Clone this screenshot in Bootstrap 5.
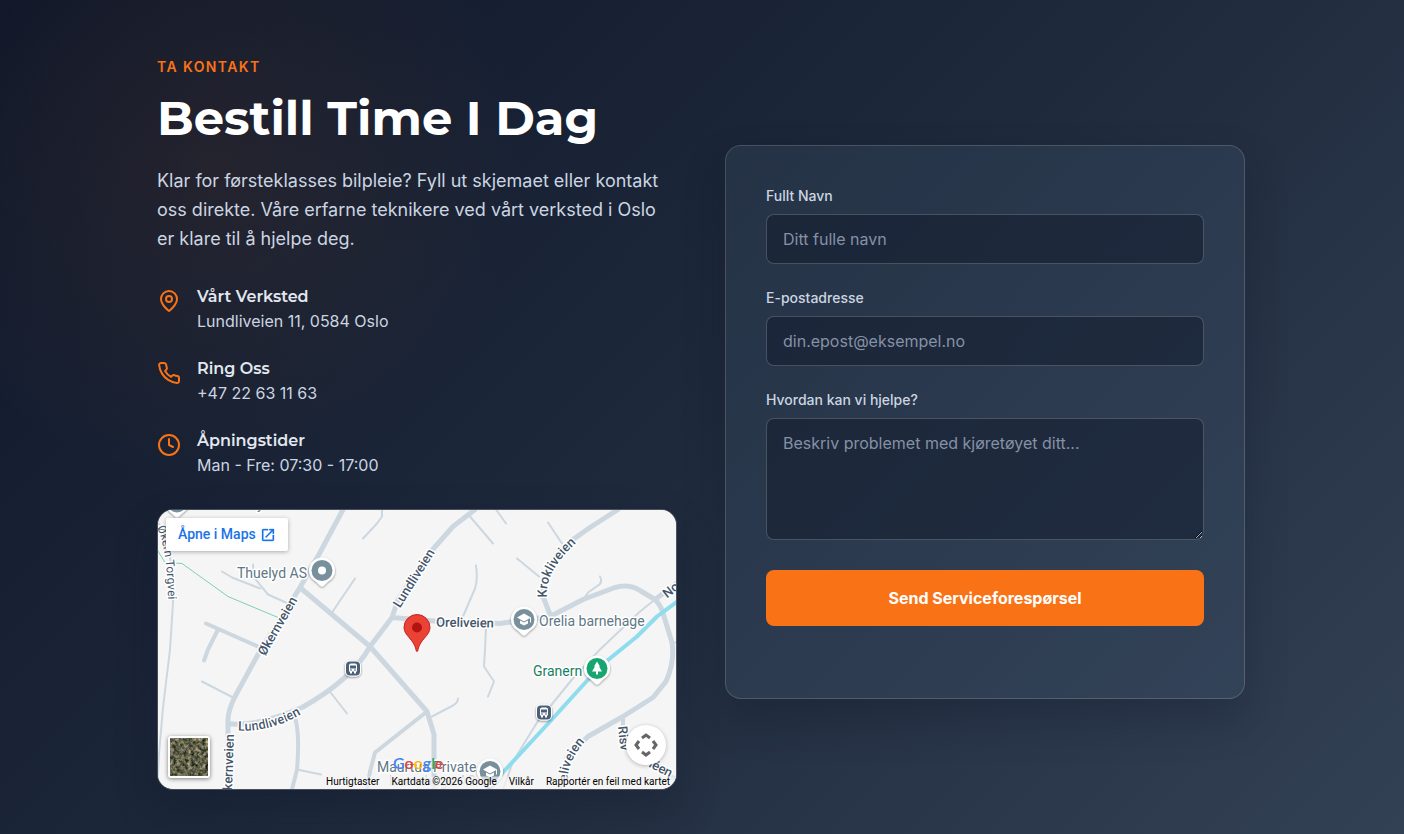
<!DOCTYPE html>
<html lang="no">
<head>
<meta charset="utf-8">
<meta name="viewport" content="width=device-width, initial-scale=1">
<title>Bestill Time I Dag</title>
<link href="https://cdn.jsdelivr.net/npm/bootstrap@5.3.0/dist/css/bootstrap.min.css" rel="stylesheet">
<style>
  :root { --accent: #f97316; --soft: #cbd5e1; --heading: Montserrat, Inter, sans-serif; }
  body { font-family: Inter, sans-serif; color: var(--soft); background: #1e293b; }
  .contact {
    min-height: 100vh; padding: 54px 2px 44px 0;
    background:
      radial-gradient(circle at 15% 20%, rgba(249,115,22,.07), transparent 320px),
      linear-gradient(135deg, #0f172a 0%, #1e293b 50%, #334155 100%);
  }
  .wrap { max-width: 1088px; }
  .split { display: grid; grid-template-columns: 1fr 1fr; gap: 48px; align-items: center; }
  .eyebrow { color: var(--accent); font-size: 14px; line-height: 26px; font-weight: 600; letter-spacing: .1em; }
  .headline { font: 700 48px/58px var(--heading); color: #fff; margin: 9px 0 19px; }
  .intro { font-size: 18px; line-height: 29px; margin-bottom: 31px; }
  .facts { gap: 22px; margin-bottom: 31px; line-height: 25px; }
  .facts svg { width: 24px; height: 24px; margin-top: 5px; fill: none; stroke: var(--accent); stroke-width: 2; stroke-linecap: round; stroke-linejoin: round; flex: none; }
  .facts h2 { font: 600 16px/25px var(--heading); color: #e2e8f0; margin: 0; }
  .mapbox { height: 281px; border: 1px solid rgba(255,255,255,.2); border-radius: 16px; overflow: hidden; background: #f5f5f5 padding-box; box-shadow: 0 20px 40px rgba(15,23,42,.3); font-family: Roboto, sans-serif; }
  .mapbox > svg { display: block; width: 100%; height: 100%; }
  .open-link { top: 8px; left: 8px; height: 33px; padding: 0 12px; gap: 4px; font-size: 14px; font-weight: 500; color: #1a73e8; background: #fff; border-radius: 2px; box-shadow: 0 1px 4px rgba(0,0,0,.3); }
  .sat { left: 10px; bottom: 11px; width: 42px; height: 42px; padding: 0; border: 2px solid #fff; border-radius: 3px; box-shadow: 0 1px 4px rgba(0,0,0,.5); overflow: hidden; background: #5b6150; }
  .pan { right: 10px; bottom: 24px; width: 40px; height: 40px; padding: 0; border: 0; border-radius: 50%; background: #fff; box-shadow: 0 1px 4px rgba(0,0,0,.25); }
  .credits { right: 0; bottom: 0; height: 14px; padding-right: 6px; gap: 12px; font-size: 10px; line-height: 14px; color: #000; white-space: nowrap; }
  .credits button { padding: 0; border: 0; background: none; }
  .credits button, .credits a { color: #000; text-decoration: none; }
  .panel { padding: 40px 40px 72px; border: 1px solid rgba(255,255,255,.2); border-radius: 16px; background: rgba(65,88,115,.27) padding-box; box-shadow: 0 20px 40px rgba(15,23,42,.3); }
  .panel label { font-size: 14px; line-height: 20px; font-weight: 500; margin-bottom: 8px; }
  .panel .form-control { height: 50px; padding: 12px 16px; font-size: 16px; line-height: 24px; color: #fff; background: rgba(15,23,42,.5); border: 1px solid rgba(255,255,255,.2); border-radius: 8px; }
  .panel .form-control::placeholder { color: #8591a5; }
  .panel textarea.form-control { height: 122px; }
  .send { height: 56px; margin-top: 30px; background: var(--accent); color: #fff; font-size: 16px; font-weight: 700; border: 0; border-radius: 8px; }
  .send:hover { background: #ea6a10; color: #fff; }
  .road path { fill: none; stroke: #cdd7e0; stroke-linejoin: round; stroke-linecap: round; }
  .lbl { font: 500 13px Roboto, sans-serif; fill: #45566b; stroke: #fff; stroke-width: 3px; paint-order: stroke; stroke-linejoin: round; }
  .poi { font: 400 14px Roboto, sans-serif; fill: #607786; stroke: #fff; stroke-width: 3px; paint-order: stroke; stroke-linejoin: round; }
  .logo { font: 600 16px Lato, sans-serif; }
  @media (max-width: 991px) { .split { grid-template-columns: 1fr; } .contact { padding: 32px 16px; } }
</style>
</head>
<body>
<main class="contact">
  <div class="wrap mx-auto split">
    <section>
      <div class="eyebrow">TA KONTAKT</div>
      <h1 class="headline">Bestill Time I Dag</h1>
      <p class="intro">Klar for førsteklasses bilpleie? Fyll ut skjemaet eller kontakt oss direkte. Våre erfarne teknikere ved vårt verksted i Oslo er klare til å hjelpe deg.</p>
      <div class="facts d-flex flex-column">
        <div class="d-flex gap-3">
          <svg viewBox="0 0 24 24" aria-hidden="true"><path d="M20 10c0 6-8 12-8 12s-8-6-8-12a8 8 0 0 1 16 0Z"/><circle cx="12" cy="10" r="3"/></svg>
          <div><h2>Vårt Verksted</h2><div>Lundliveien 11, 0584 Oslo</div></div>
        </div>
        <div class="d-flex gap-3">
          <svg viewBox="0 0 24 24" aria-hidden="true"><path d="M22 16.92v3a2 2 0 0 1-2.18 2 19.79 19.79 0 0 1-8.63-3.07 19.5 19.5 0 0 1-6-6 19.79 19.79 0 0 1-3.07-8.67A2 2 0 0 1 4.11 2h3a2 2 0 0 1 2 1.72 12.84 12.84 0 0 0 .7 2.81 2 2 0 0 1-.45 2.11L8.09 9.91a16 16 0 0 0 6 6l1.27-1.27a2 2 0 0 1 2.11-.45 12.84 12.84 0 0 0 2.81.7A2 2 0 0 1 22 16.92z"/></svg>
          <div><h2>Ring Oss</h2><div>+47 22 63 11 63</div></div>
        </div>
        <div class="d-flex gap-3">
          <svg viewBox="0 0 24 24" aria-hidden="true"><circle cx="12" cy="12" r="10"/><path d="M12 6v6l4 2"/></svg>
          <div><h2>Åpningstider</h2><div>Man - Fre: 07:30 - 17:00</div></div>
        </div>
      </div>
      <div class="mapbox position-relative">
        <svg viewBox="158 510 518 280" preserveAspectRatio="xMidYMid slice" role="img" aria-label="Kart">
          <defs>
            <filter id="drop" x="-30%" y="-30%" width="160%" height="170%"><feDropShadow dx="0" dy="1" stdDeviation="1" flood-opacity=".45"/></filter>
            <g id="pin"><path d="M0-13a13 13 0 0 1 13 13c0 6-4 9-8 12l-3 3q-2 2-4 0l-3-3c-4-3-8-6-8-12A13 13 0 0 1 0-13Z" fill="#fff" filter="url(#drop)"/></g>
            <g id="cap"><use href="#pin"/><circle r="10.500" fill="#78909c"/><path d="M0-6 7-2 0 2-7-2Z M-4 1v3l4 2 4-2v-3l-4 2Z M6-2h1v5h-1Z" fill="#fff"/></g>
            <g id="bus"><rect x="-8" y="-8" width="16" height="16" rx="5" fill="#fff" filter="url(#drop)"/><rect x="-7" y="-7" width="14" height="14" rx="4" fill="#4b6078"/><path d="M-4-3q0-2 2-2h4q2 0 2 2v6h-1v2h-2v-2h-2v2h-2v-2h-1Z" fill="#fff"/><path d="M-3-3h6v3h-6Z M-3 1h2v1h-2Z M1 1h2v1h-2Z" fill="#4b6078"/></g>
            <path id="lund" d="M238 731Q272 733 306 712"/>
            <path id="krok" d="M547 598Q544 572 578 542"/>
            <path id="torg" d="M157 528Q168 550 168 608"/>
            <path id="reli" d="M568 782Q566 760 594 732"/>
          </defs>
          <rect x="158" y="510" width="518" height="280" fill="#f5f5f5"/>
          <g class="road">
            <g stroke-width="2">
              <path stroke-width="2" d="M159 524Q174 550 173 603L170 650 163 708 159 755 157 790"/>
              <path d="M222 572 232 578 260 589M253 565 254 578 268 595 288 604M202 682 233 698M297 770 321 775M329 691 347 714M432 717 453 706Q458 703 458 699M486 627 485 650 484 667 494 682 488 697M382 510V517L377 524 363 539M355 579 332 613M470 517 493 544M476 566Q478 580 475 589L463 617M496 510 506 524M548 523 562 544M517 559 539 577M600 577Q603 583 598 586L588 593 582 602M655 600 640 612 600 650 572 680 537 723 513 762 503 790M674 643H677"/>
            </g>
            <path stroke-width="4" d="M206 624 258 647M218 630 208 650 204 661M295 718Q300 735 297 770L292 790M427 712 375 753 370 772 367 790M623 717V735L630 752 676 780M567 758 560 790"/>
            <path stroke-width="5" d="M343 510 320 553 300 588 258 655 235 697Q227 713 228 724V790M300 588 370 647 427 712 434 735V790M475 510 453 527 430 553 398 600 392 618 370 647Q352 680 302 708 255 728 228 724M392 618 440 622 500 624 550 617 583 600 615 588Q629 584 640 591L655 600Q662 607 664 617L672 643Q675 662 666 682L653 698 623 717 588 737 567 758M550 615 543 597Q541 565 573 540L590 528 618 510M655 600 678 583"/>
            <path style="stroke:#8fdcee" stroke-width="4" d="M680 600 657 617 637 637 600 667 550 722 500 776 485 792"/>
            <path style="stroke:#7fd0ae" stroke-width="1" d="M157 550 165 563 182 564 228 597 278 618"/>
          </g>
          <use href="#pin" x="177" y="502"/><circle cx="177" cy="503" r="10" fill="#78909c"/>
          <text class="poi" x="257" y="509">y</text>
          <text class="lbl" style="font-size:12px;font-weight:400"><textPath href="#torg">Økern Torgvei</textPath></text>
          <text class="lbl" transform="translate(265 657) rotate(-60)">Økernveien</text>
          <text class="lbl" transform="translate(400 609) rotate(-58)">Lundliveien</text>
          <text class="lbl" transform="translate(436 627) rotate(1)">Oreliveien</text>
          <text class="lbl"><textPath href="#krok">Krokliveien</textPath></text>
          <text class="lbl"><textPath href="#lund">Lundliveien</textPath></text>
          <text class="lbl"><textPath href="#reli">eliveien</textPath></text>
          <text class="lbl" transform="translate(232 791) rotate(-88)">kernveien</text>
          <text class="lbl" transform="translate(667 599) rotate(-38)">No</text>
          <text class="lbl" transform="translate(618 727) rotate(84)">Risv</text>
          <text class="lbl" transform="translate(648 767) rotate(27)">léen</text>
          <text class="poi" x="237" y="578">Thuelyd AS</text>
          <text class="poi" x="539" y="626">Orelia barnehage</text>
          <text class="poi" style="fill:#188060" x="533" y="676">Granern</text>
          <text class="poi" x="377" y="772">Maurtua Private</text>
          <text class="poi" style="opacity:.3" x="389" y="786">barnehage AS</text>
          <g transform="translate(322 571)"><use href="#pin"/><circle r="10.500" fill="#78909c"/><circle r="4" fill="#fff"/></g>
          <use href="#cap" x="524" y="620"/>
          <use href="#cap" x="490" y="772"/>
          <g transform="translate(597 669)"><use href="#pin"/><circle r="10.500" fill="#18a572"/><path d="M0-7 3-2H2L5 3H1V6H-1V3H-5L-2-2H-3Z" fill="#fff"/></g>
          <use href="#bus" x="353" y="669"/>
          <use href="#bus" x="544" y="713"/>
          <path d="M417 615a13 13 0 0 1 13 13c0 8-10 12-12 22q0 2-1 2t-1-2c-2-10-12-14-12-22a13 13 0 0 1 13-13Z" fill="#ea4335" stroke="#c5221f"/><circle cx="417" cy="628" r="5" fill="#b31412"/>
          <text class="logo" x="393" y="769"><tspan fill="#4285f4">G</tspan><tspan fill="#ea4335">o</tspan><tspan fill="#fbbc04">o</tspan><tspan fill="#4285f4">g</tspan><tspan fill="#34a853">l</tspan><tspan fill="#ea4335">e</tspan></text>
          <rect x="320" y="777" width="356" height="13" fill="#f5f5f5" opacity=".7"/>
        </svg>
        <a href="#" class="open-link position-absolute d-flex align-items-center text-decoration-none">Åpne i Maps
          <svg width="16" height="16" viewBox="0 0 24 24" fill="#1a73e8" aria-hidden="true"><path d="M19 19H5V5h7V3H5a2 2 0 0 0-2 2v14a2 2 0 0 0 2 2h14a2 2 0 0 0 2-2v-7h-2v7zM14 3v2h3.590l-9.830 9.830 1.410 1.410L19 6.410V10h2V3h-7z" stroke="#1a73e8" stroke-width=".5"/></svg></a>
        <button type="button" class="sat position-absolute" aria-label="Satellitt">
          <svg class="d-block" width="38" height="38" viewBox="0 0 38 38"><filter id="noise" x="0" y="0" width="100%" height="100%" color-interpolation-filters="sRGB"><feTurbulence type="fractalNoise" baseFrequency=".28" numOctaves="4" seed="7"/><feColorMatrix values="1 .3 0 0 -.27  .8 .4 0 0 -.22  .8 .1 .2 0 -.26  0 0 0 0 1"/></filter><rect width="38" height="38" filter="url(#noise)"/></svg></button>
        <button type="button" class="pan position-absolute" aria-label="Kartkontroller">
          <svg class="d-block mx-auto" width="24" height="24" viewBox="0 0 24 24" fill="none" stroke="#666" stroke-width="3"><path d="M8 5l4-3 4 3M8 19l4 3 4-3M5 8l-3 4 3 4M19 8l3 4-3 4"/></svg></button>
        <div class="credits position-absolute d-flex"><button type="button">Hurtigtaster</button><span>Kartdata ©2026 Google</span><a href="#">Vilkår</a><a href="#">Rapportér en feil med kartet</a></div>
      </div>
    </section>
    <form class="panel d-flex flex-column">
      <div class="mb-4"><label class="d-block" for="navn">Fullt Navn</label><input class="form-control" id="navn" type="text" placeholder="Ditt fulle navn"></div>
      <div class="mb-4"><label class="d-block" for="epost">E-postadresse</label><input class="form-control" id="epost" type="email" placeholder="din.epost@eksempel.no"></div>
      <div><label class="d-block" for="melding">Hvordan kan vi hjelpe?</label><textarea class="form-control" id="melding" placeholder="Beskriv problemet med kjøretøyet ditt..."></textarea></div>
      <button type="submit" class="btn send w-100">Send Serviceforespørsel</button>
    </form>
  </div>
</main>
<script src="https://cdn.jsdelivr.net/npm/bootstrap@5.3.0/dist/js/bootstrap.bundle.min.js"></script>
</body>
</html>
